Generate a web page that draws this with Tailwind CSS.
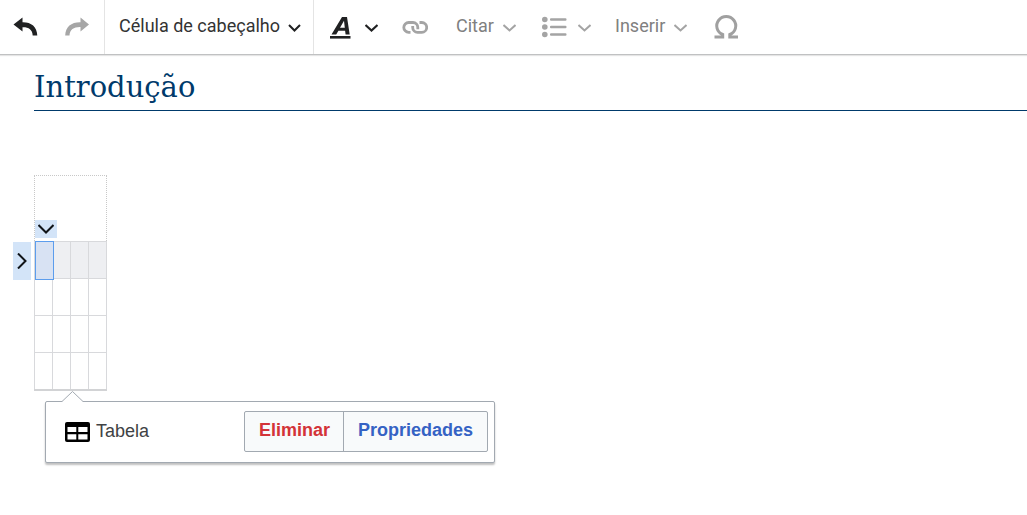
<!DOCTYPE html>
<html lang="pt">
<head>
<meta charset="utf-8">
<meta name="viewport" content="width=device-width, initial-scale=1">
<title>Introdução</title>
<script src="https://cdn.jsdelivr.net/npm/@tailwindcss/browser@4"></script>
</head>
<body class="min-h-screen bg-white font-['Liberation_Sans',Arial,sans-serif] text-[#404244]">
<header class="flex h-[55px] items-stretch border-b border-[#c0c1c2] bg-white font-[Roboto,sans-serif] text-lg text-[#333] shadow-[0_1px_1px_#0000001a]">
  <div class="flex w-[105px] shrink-0 items-center gap-[26px] border-r border-[#e4e4e4] pl-[13px]">
    <button type="button" aria-label="Desfazer" class="text-[#202122]">
      <svg class="block h-5 w-[26px]" viewBox="0 0 26 20"><path d="M0.500 7.500 9.500 0.500V5.200C18 5 24 9.500 24.300 18.500H19.700C19.500 12.500 15.500 10 9.500 10.200V14.500Z" fill="currentColor"/></svg>
    </button>
    <button type="button" aria-label="Refazer" disabled class="text-[#a6a6a6]">
      <svg class="block h-5 w-[26px]" viewBox="0 0 26 20"><path d="M24 7.500 15.500 0.500V5.200C6.500 5 0.500 9.500 0.200 18.500H4.500C4.700 12.500 9 9.800 15.500 10V14.500Z" fill="currentColor"/></svg>
    </button>
  </div>
  <button type="button" class="flex w-[209px] shrink-0 items-center justify-between border-r border-[#e4e4e4] pr-3 pb-[3px] pl-[14px]">
    <span class="whitespace-nowrap">Célula de cabeçalho</span>
    <svg class="mt-1 h-2 w-[13px] text-[#202122]" viewBox="0 0 13 8" fill="none" stroke="currentColor" stroke-width="2"><path d="M1 1 6.500 6.500 12 1"/></svg>
  </button>
  <div class="flex shrink-0 items-center pb-[3px] pl-4 text-[#808080]">
    <button type="button" aria-label="Estilo de texto" class="flex w-[72px] items-center gap-[14px] text-[#202122]">
      <svg class="mt-1 h-[23px] w-[21px]" viewBox="0 0 21 23" fill="currentColor"><path fill-rule="evenodd" d="M1.500 18.500 12 1H17L19.700 18.500H15.600L15.100 14.700H8.400L6.200 18.500ZM10 11.700H14.800L14 4.800Z"/><path d="M0 20H20.500V22.600H0Z"/></svg>
      <svg class="mt-1 h-2 w-[13px]" viewBox="0 0 13 8" fill="none" stroke="currentColor" stroke-width="2.200"><path d="M0.500 1 6.500 6.500 12.500 1"/></svg>
    </button>
    <button type="button" aria-label="Ligação" disabled class="w-[54px] text-[#a4a4a4]">
      <svg class="mt-1 h-4 w-[26px]" viewBox="0 0 26 16" fill="none" stroke="currentColor" stroke-width="2.800"><path d="M8.500 12.300H6.700A4.900 4.900 0 0 1 6.700 2.500H11A4.900 4.900 0 0 1 15.800 7.400V9.200"/><path d="M17.500 2.500H19.800A4.900 4.900 0 0 1 19.800 12.300H15.500A4.900 4.900 0 0 1 10.700 7.400V6"/></svg>
    </button>
    <button type="button" disabled class="flex w-[86px] items-center gap-[9px]">
      <span>Citar</span>
      <svg class="mt-1 h-2 w-[13px] text-[#a4a4a4]" viewBox="0 0 13 8" fill="none" stroke="currentColor" stroke-width="2"><path d="M0.500 1 6.500 6.500 12.500 1"/></svg>
    </button>
    <button type="button" aria-label="Estrutura" disabled class="flex w-[73px] items-center gap-[11px] text-[#a4a4a4]">
      <svg class="mt-[2px] h-[22px] w-[25px]" viewBox="0 0 25 22" fill="currentColor"><circle cx="2.800" cy="3.500" r="2.800"/><circle cx="2.800" cy="11" r="2.800"/><circle cx="2.800" cy="18.500" r="2.800"/><rect x="8" y="2.200" width="16.500" height="2.600" rx="1"/><rect x="8" y="9.700" width="16.500" height="2.600" rx="1"/><rect x="8" y="17.200" width="16.500" height="2.600" rx="1"/></svg>
      <svg class="mt-1 h-2 w-[13px]" viewBox="0 0 13 8" fill="none" stroke="currentColor" stroke-width="2"><path d="M0.500 1 6.500 6.500 12.500 1"/></svg>
    </button>
    <button type="button" disabled class="flex w-[99px] items-center gap-[9px]">
      <span>Inserir</span>
      <svg class="mt-1 h-2 w-[13px] text-[#a4a4a4]" viewBox="0 0 13 8" fill="none" stroke="currentColor" stroke-width="2"><path d="M0.500 1 6.500 6.500 12.500 1"/></svg>
    </button>
    <button type="button" aria-label="Caracteres especiais" disabled class="text-[#a0a0a0]">
      <svg class="mt-[2px] block h-6 w-[25px]" viewBox="0 0 25 24" fill="none" stroke="currentColor" stroke-width="3"><path d="M0.500 22H8.700V19.500A9.500 9.300 0 1 1 15.800 19.500V22H24"/></svg>
    </button>
  </div>
</header>

<main class="pl-[34px]">
  <h1 class="h-14 border-b border-[#003a6b] pt-3 font-['DejaVu_Serif',serif] text-[29px]/10 text-[#003a6b]">Introdução</h1>

  <div class="relative mt-16 w-[73px]">
    <div class="h-[66px] border border-b-0 border-dotted border-[#c8c8c8]"></div>
    <table aria-label="Tabela" class="w-full table-fixed border-collapse border-b-2 border-[#d2d3d5]">
      <thead><tr class="h-[37px] bg-[#eeeff2]"><th scope="col" class="border border-[#d8d9dc]"></th><th scope="col" class="border border-[#d8d9dc]"></th><th scope="col" class="border border-[#d8d9dc]"></th><th scope="col" class="border border-[#d8d9dc]"></th></tr></thead>
      <tbody>
        <tr class="h-[37px]"><td class="border border-[#d8d9dc]"></td><td class="border border-[#d8d9dc]"></td><td class="border border-[#d8d9dc]"></td><td class="border border-[#d8d9dc]"></td></tr>
        <tr class="h-[37px]"><td class="border border-[#d8d9dc]"></td><td class="border border-[#d8d9dc]"></td><td class="border border-[#d8d9dc]"></td><td class="border border-[#d8d9dc]"></td></tr>
        <tr class="h-[37px]"><td class="border border-[#d8d9dc]"></td><td class="border border-[#d8d9dc]"></td><td class="border border-[#d8d9dc]"></td><td class="border border-[#d8d9dc]"></td></tr>
      </tbody>
    </table>
    <div class="absolute top-[66px] left-px h-[39px] w-[19px] border border-[#5c9ded] bg-[#d8e2f3]"></div>
    <button type="button" aria-label="Opções da coluna" class="absolute top-[45px] left-px flex h-[18px] w-[22px] items-center justify-center bg-[#d3e4f8] text-[#101418]">
      <svg class="h-[10px] w-4" viewBox="0 0 16 10" fill="none" stroke="currentColor" stroke-width="2"><path d="M0.500 1 8 8.500 15.500 1"/></svg>
    </button>
    <button type="button" aria-label="Opções da linha" class="absolute top-[67px] -left-[21px] flex h-[38px] w-[18px] items-center justify-center bg-[#d3e4f8] text-[#101418]">
      <svg class="h-4 w-[10px]" viewBox="0 0 10 16" fill="none" stroke="currentColor" stroke-width="2"><path d="M1 0.500 8.500 8 1 15.500"/></svg>
    </button>
  </div>

  <section aria-label="Tabela" class="relative mt-[10px] ml-[11px] flex h-[62px] w-full max-w-[450px] items-center justify-between rounded-[2px] border border-[#a2a9b1] bg-white pr-[6px] pl-[19px] shadow-[0_2px_2px_#00000040]">
    <svg class="absolute -top-[11px] left-4 h-[11px] w-[21px]" viewBox="0 0 21 11"><path d="M0 10.500 10.500 0.500 21 10.500V11H0Z" fill="#fff"/><path d="M0 10.500 10.500 0.500 21 10.500" fill="none" stroke="#a2a9b1"/></svg>
    <div class="flex items-center gap-[6px] pb-px text-lg">
      <svg class="mt-px h-5 w-[25px]" viewBox="0 0 25 20"><rect width="25" height="20" rx="2" fill="#000"/><path d="M2.500 5H11.300V10H2.500ZM13.300 5H22.500V10H13.300ZM2.500 12.300H11.300V17.500H2.500ZM13.300 12.300H22.500V17.500H13.300Z" fill="#fff"/></svg>
      <span>Tabela</span>
    </div>
    <div class="flex h-[41px] rounded-[2px] border border-[#a2a9b1] bg-[#f8fafb] text-lg font-bold">
      <button type="button" class="border-r border-[#a2a9b1] pr-[13px] pb-[3px] pl-[14px] text-[#d33338]">Eliminar</button>
      <button type="button" class="px-[14px] pb-[3px] text-[#3562c4]">Propriedades</button>
    </div>
  </section>
</main>
</body>
</html>
